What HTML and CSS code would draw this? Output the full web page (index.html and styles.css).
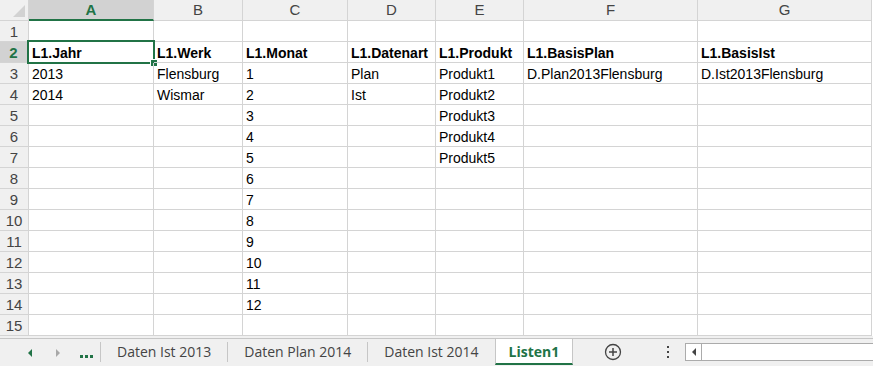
FILE: index.html
```html
<!DOCTYPE html>
<html lang="de">
<head>
  <meta charset="UTF-8">
  <title>Listen1</title>
  <link rel="stylesheet" href="styles.css">
</head>
<body>

  <!-- Sheet grid -->
  <div class="sheet" id="sheet"></div>

  <!-- Sheet tabs -->
  <div class="tabbar">
    <div class="tabstrip">
      <div class="nav">
        <span class="arrow-left"></span>
        <span class="arrow-right"></span>
        <span class="ellipsis"><i></i><i></i><i></i></span>
      </div>
      <span class="sep"></span>
      <div class="tab">Daten Ist 2013</div>
      <span class="sep"></span>
      <div class="tab">Daten Plan 2014</div>
      <span class="sep"></span>
      <div class="tab">Daten Ist 2014</div>
      <div class="tab active">Listen1</div>
      <div class="add">
        <svg width="18" height="18" viewBox="0 0 18 18">
          <circle cx="9" cy="9" r="7.5" fill="none" stroke="#444" stroke-width="1.3"/>
          <path d="M9 5v8M5 9h8" stroke="#444" stroke-width="1.5"/>
        </svg>
      </div>
      <div class="more"><i></i><i></i><i></i></div>
      <div class="hscroll">
        <div class="scroll-btn"><span class="scroll-arrow"></span></div>
      </div>
    </div>
  </div>

  <script>
    // Data
    const columns = ['A', 'B', 'C', 'D', 'E', 'F', 'G'];
    const rows = {
      2: ['L1.Jahr', 'L1.Werk', 'L1.Monat', 'L1.Datenart', 'L1.Produkt', 'L1.BasisPlan', 'L1.BasisIst'],
      3: ['2013', 'Flensburg', '1', 'Plan', 'Produkt1', 'D.Plan2013Flensburg', 'D.Ist2013Flensburg'],
      4: ['2014', 'Wismar', '2', 'Ist', 'Produkt2'],
      5: ['', '', '3', '', 'Produkt3'],
      6: ['', '', '4', '', 'Produkt4'],
      7: ['', '', '5', '', 'Produkt5'],
      8: ['', '', '6'],
      9: ['', '', '7'],
      10: ['', '', '8'],
      11: ['', '', '9'],
      12: ['', '', '10'],
      13: ['', '', '11'],
      14: ['', '', '12']
    };
    const selRow = 2;
    const selCol = 0;

    const sheet = document.getElementById('sheet');

    function cell(className, text) {
      const div = document.createElement('div');
      div.className = className;
      if (text) div.textContent = text;
      sheet.appendChild(div);
      return div;
    }

    // Column headers
    cell('corner').innerHTML = '<span class="corner-mark"></span>';
    columns.forEach((col, i) => {
      cell('col-head' + (i === selCol ? ' selected' : ''), col);
    });

    // Rows
    for (let r = 1; r <= 15; r++) {
      cell('row-head' + (r === selRow ? ' selected' : ''), String(r));
      const values = rows[r] || [];
      columns.forEach((col, i) => {
        const c = cell('cell' + (r === 2 ? ' bold' : ''), values[i]);
        if (r === selRow && i === selCol) {
          c.innerHTML += '<span class="active-cell"><span class="fill-handle"></span></span>';
        }
      });
    }
  </script>
</body>
</html>
```

FILE: styles.css
```css
body {
  margin: 0;
  width: 873px;
  height: 366px;
  overflow: hidden;
  background-color: #fff;
  font-family: "Liberation Sans", Arial, sans-serif;
}
.sheet {
  display: grid;
  grid-template-columns: 29px 125px 89px 105px 88px 88px 174px 174px;
  grid-auto-rows: 21px;
}
.sheet > div {
  box-sizing: border-box;
  border-right: 1px solid #d4d4d4;
  border-bottom: 1px solid #d4d4d4;
}
.corner {
  background-color: #f0f0f0;
  display: flex;
  justify-content: flex-end;
  align-items: flex-end;
  padding: 0 3px 3px 0;
}
.corner-mark {
  width: 0;
  height: 0;
  border-left: 12px solid transparent;
  border-bottom: 12px solid #d2d2d2;
}
.col-head {
  background-color: #f0f0f0;
  color: #444;
  font-size: 15px;
  text-align: center;
  line-height: 20px;
}
.col-head.selected {
  background-color: #d2d2d2;
  color: #217346;
  font-weight: bold;
  border-bottom: 2px solid #217346 !important;
  line-height: 19px;
}
.row-head {
  background-color: #f0f0f0;
  color: #444;
  font-size: 15px;
  text-align: center;
  line-height: 22px;
}
.row-head.selected {
  background-color: #d2d2d2;
  color: #217346;
  font-weight: bold;
  border-right: 2px solid #217346 !important;
}
.cell {
  position: relative;
  font-size: 14px;
  color: #000;
  padding: 0 2px 0 3px;
  line-height: 22px;
  white-space: nowrap;
}
.cell.bold {
  font-weight: bold;
}
.active-cell {
  position: absolute;
  left: -2px;
  top: -2px;
  right: -2px;
  bottom: -2px;
  border: 2px solid #217346;
}
.fill-handle {
  position: absolute;
  right: -5px;
  bottom: -5px;
  width: 6px;
  height: 6px;
  background-color: #217346;
  border: 1px solid #fff;
}

/* Tabs */
.tabbar {
  height: 30px;
  background-color: #f0f0f0;
  padding-top: 2px;
  box-sizing: border-box;
}
.tabstrip {
  display: flex;
  height: 28px;
  border-top: 1px solid #c6c6c6;
  box-sizing: border-box;
  font-family: "Open Sans", sans-serif;
  font-size: 14px;
  color: #444;
}
.nav {
  width: 100px;
  display: flex;
  align-items: center;
}
.arrow-left {
  margin-left: 28px;
  width: 0;
  height: 0;
  border-top: 4px solid transparent;
  border-bottom: 4px solid transparent;
  border-right: 4px solid #217346;
  margin-top: 1px;
}
.arrow-right {
  margin-left: 24px;
  width: 0;
  height: 0;
  border-top: 4px solid transparent;
  border-bottom: 4px solid transparent;
  border-left: 4px solid #a8a8a8;
  margin-top: 1px;
}
.ellipsis {
  margin-left: 20px;
  margin-top: 8px;
  display: flex;
  gap: 2px;
}
.ellipsis i {
  width: 3px;
  height: 3px;
  background-color: #217346;
}
.sep {
  width: 1px;
  height: 20px;
  margin-top: 3px;
  background-color: #c6c6c6;
}
.tab {
  padding: 0 16px;
  display: flex;
  align-items: center;
  height: 24px;
  white-space: nowrap;
}
.tab.active {
  background-color: #fff;
  color: #217346;
  font-weight: bold;
  border-left: 1px solid #c6c6c6;
  border-right: 1px solid #c6c6c6;
  border-bottom: 2px solid #217346;
  padding: 0 13px;
}
.add {
  width: 80px;
  display: flex;
  justify-content: center;
  align-items: center;
  height: 26px;
}
.more {
  width: 30px;
  display: flex;
  flex-direction: column;
  align-items: center;
  padding-top: 7px;
  gap: 3px;
  box-sizing: border-box;
}
.more i {
  width: 2px;
  height: 2px;
  background-color: #444;
}
.hscroll {
  flex-grow: 1;
  margin: 4px 0 0 2px;
  height: 18px;
  box-sizing: border-box;
  border: 1px solid #ababab;
  border-right: none;
  background-color: #fff;
}
.scroll-btn {
  width: 15px;
  height: 16px;
  border-right: 1px solid #ababab;
  display: flex;
  justify-content: center;
  align-items: center;
}
.scroll-arrow {
  width: 0;
  height: 0;
  border-top: 4px solid transparent;
  border-bottom: 4px solid transparent;
  border-right: 4px solid #444;
}
```
